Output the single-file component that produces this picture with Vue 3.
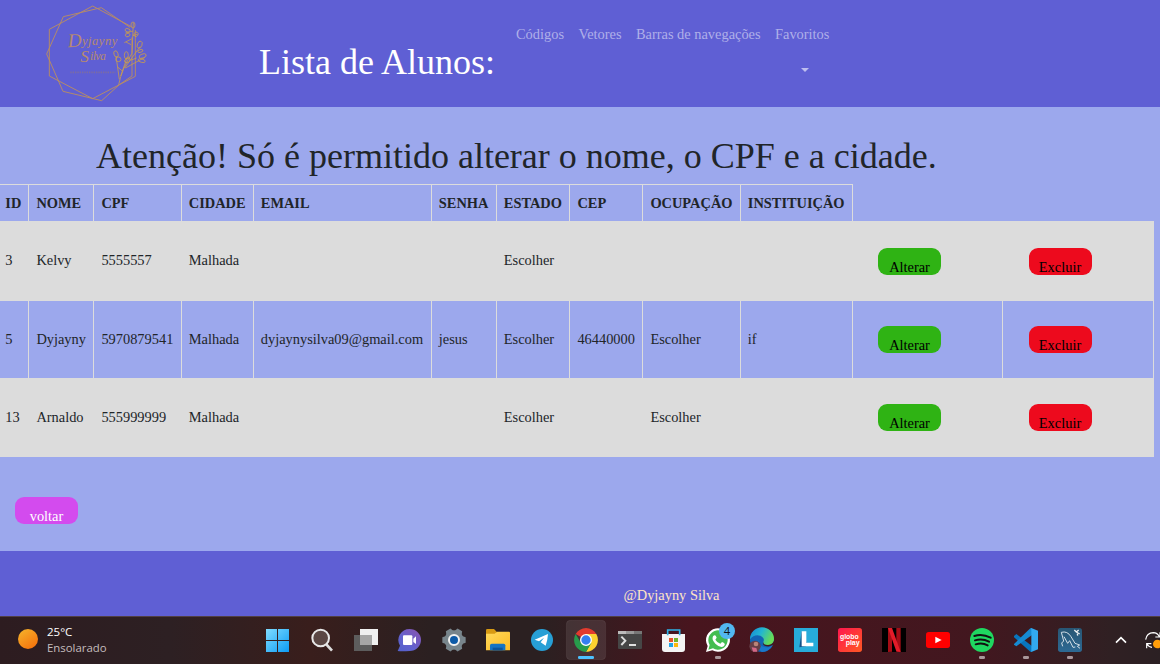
<script setup>
const columns = ['ID', 'NOME', 'CPF', 'CIDADE', 'EMAIL', 'SENHA', 'ESTADO', 'CEP', 'OCUPAÇÃO', 'INSTITUIÇÃO']
const rows = [
  ['3', 'Kelvy', '5555557', 'Malhada', '', '', 'Escolher', '', '', ''],
  ['5', 'Dyjayny', '5970879541', 'Malhada', 'dyjaynysilva09@gmail.com', 'jesus', 'Escolher', '46440000', 'Escolher', 'if'],
  ['13', 'Arnaldo', '555999999', 'Malhada', '', '', 'Escolher', '', 'Escolher', ''],
]
const links = ['Códigos', 'Vetores', 'Barras de navegações']
</script>

<template>
  <div class="page">
    <header class="top">
      <svg class="logo" viewBox="0 0 420 330" fill="none" stroke="#b98d62" stroke-width="2.8">
        <path d="M188 18 304 80M316 90V229L188 296 58 228V88L188 18" />
        <path d="M214 23 100 50 50 162 99 274 215 302 268 254M214 23 300 82M306 112V228L268 254" />
        <g stroke="#d0a044" stroke-width="2.2">
          <path d="M266 254Q276 205 306 160L310 68M268 238 258 168M272 228 292 170M284 204 330 140M286 204 345 172M304 117 283 128M309 107 322 103M309 93 286 99M303 134 288 126M277 213 263 201M301 181 320 174" />
          <ellipse cx="309" cy="75" rx="6" ry="9" />
          <ellipse cx="293" cy="91" rx="8" ry="5" transform="rotate(20 293 91)" />
          <ellipse cx="293" cy="105" rx="7" ry="5" transform="rotate(-20 293 105)" />
          <ellipse cx="318" cy="103" rx="6" ry="7" transform="rotate(30 318 103)" />
          <ellipse cx="329" cy="134" rx="7" ry="11" transform="rotate(20 329 134)" />
          <ellipse cx="331" cy="153" rx="8" ry="4" transform="rotate(-20 331 153)" />
          <ellipse cx="338" cy="168" rx="11" ry="6" transform="rotate(-20 338 168)" />
          <ellipse cx="335" cy="182" rx="11" ry="5" transform="rotate(15 335 182)" />
          <ellipse cx="258" cy="162" rx="6" ry="10" transform="rotate(-20 258 162)" />
          <ellipse cx="265" cy="178" rx="8" ry="7" />
          <ellipse cx="289" cy="166" rx="6" ry="11" />
          <ellipse cx="292" cy="181" rx="9" ry="6" transform="rotate(-30 292 181)" />
        </g>
        <g class="script" fill="#b68a70" stroke="none">
          <text x="114" y="142" font-size="58" transform="rotate(-3 114 142)">D</text>
          <text x="156" y="135" font-size="38" textLength="106">yjayny</text>
          <text x="151" y="187" font-size="52">S</text>
          <text x="180" y="180" font-size="36" textLength="48">ilva</text>
        </g>
        <path d="M121 217H256" stroke="#7d6da1" stroke-width="5" stroke-dasharray="4 3" />
      </svg>
      <h1>Lista de Alunos:</h1>
      <nav>
        <a v-for="l in links" :key="l">{{ l }}</a>
        <a class="fav">Favoritos<i class="caret"></i></a>
      </nav>
    </header>

    <main>
      <h2>Atenção! Só é permitido alterar o nome, o CPF e a cidade.</h2>
      <table>
        <colgroup>
          <col class="c0" /><col class="c1" /><col class="c2" /><col class="c3" /><col class="c4" /><col class="c5" />
          <col class="c6" /><col class="c7" /><col class="c8" /><col class="c9" /><col class="c10" /><col class="c11" />
        </colgroup>
        <thead>
          <tr><th v-for="c in columns" :key="c">{{ c }}</th></tr>
        </thead>
        <tbody>
          <tr v-for="r in rows" :key="r[0]">
            <td v-for="(v, i) in r" :key="i">{{ v }}</td>
            <td class="act"><button class="btn edit">Alterar</button></td>
            <td class="act del"><button class="btn remove">Excluir</button></td>
          </tr>
        </tbody>
      </table>
      <button class="btn back">voltar</button>
    </main>

    <footer>@Dyjayny Silva</footer>

    <div class="taskbar">
      <div class="weather">
        <i class="sun"></i>
        <div><b>25°C</b><span>Ensolarado</span></div>
      </div>
      <div class="apps">
        <svg viewBox="0 0 132 144">
          <defs><linearGradient id="win" x1="0" y1="0" x2="1" y2="1"><stop stop-color="#7fdcff" /><stop offset="1" stop-color="#0c9bf5" /></linearGradient></defs>
          <path fill="url(#win)" d="M30 39H63V72H30ZM66 39H99V72H66ZM30 75H63V108H30ZM66 75H99V108H66Z" />
        </svg>
        <svg viewBox="0 0 132 144">
          <path d="M78 84 96 104" stroke="#dedede" stroke-width="8" />
          <circle cx="62" cy="66" r="25" fill="#5b4744" stroke="#e8e8e8" stroke-width="6" />
        </svg>
        <svg viewBox="0 0 132 144">
          <path fill="#f0f0f0" d="M48 39H102V87H48Z" />
          <path fill="#5d5d5d" d="M30 57H84V105H30Z" />
          <path fill="#a6a6a6" d="M48 57H84V87H48Z" />
        </svg>
        <svg viewBox="0 0 132 144">
          <defs><linearGradient id="chat" x1="1" y1="0" x2="0" y2="1"><stop stop-color="#8b52ad" /><stop offset=".6" stop-color="#6262cf" /><stop offset="1" stop-color="#5360c9" /></linearGradient></defs>
          <path fill="url(#chat)" d="M65 39A34 33 0 1 1 65 105Q40 107 29 105L36 89A34 33 0 0 1 65 39Z" />
          <rect x="45" y="58" width="28" height="29" rx="3" fill="#fff" />
          <path fill="#fff" d="M76 68 84 61V84L76 78Z" />
        </svg>
        <svg viewBox="0 0 132 144">
          <g fill="#78858c">
            <circle cx="66" cy="72" r="29" />
            <path d="M53 50 58 37H74L79 50Z" transform="rotate(30 66 72)" />
            <path d="M53 50 58 37H74L79 50Z" transform="rotate(90 66 72)" />
            <path d="M53 50 58 37H74L79 50Z" transform="rotate(150 66 72)" />
            <path d="M53 50 58 37H74L79 50Z" transform="rotate(210 66 72)" />
            <path d="M53 50 58 37H74L79 50Z" transform="rotate(270 66 72)" />
            <path d="M53 50 58 37H74L79 50Z" transform="rotate(330 66 72)" />
          </g>
          <circle cx="66" cy="72" r="15" fill="#0d5aa7" stroke="#f2f2f2" stroke-width="6" />
        </svg>
        <svg viewBox="0 0 132 144">
          <defs><linearGradient id="folder" x1="0" y1="0" x2="1" y2="1"><stop stop-color="#ffd95c" /><stop offset="1" stop-color="#fdbc24" /></linearGradient></defs>
          <path fill="#d79a13" d="M30 43Q30 39 34 39H54L62 47V60H30Z" />
          <path fill="url(#folder)" d="M30 53H56L63 47H99Q102 47 102 51V103H30Z" />
          <path fill="#1474c4" d="M42 103V88Q42 83 47 83H83Q88 83 88 88V103Z" />
          <path fill="#0b559c" d="M50 95H80V103H50Z" />
        </svg>
        <svg viewBox="0 0 132 144">
          <circle cx="66" cy="72" r="33" fill="#279fd5" />
          <path fill="#fff" d="M44 71 84 54Q83 72 77 89L62 79 72 65 57 76Z" />
        </svg>
        <svg viewBox="0 0 132 144">
          <rect x="7" y="13" width="118" height="118" rx="12" fill="#ffffff18" stroke="#ffffff18" stroke-width="2" />
          <path fill="#e33b2e" d="M66 72 35 54A36 36 0 0 1 97 54H66Z" />
          <path fill="#fcd12f" d="M66 72V54H97A36 36 0 0 1 66 108L80 82Z" />
          <path fill="#279c4b" d="M35 54A36 36 0 0 0 66 108L82 81 66 72 51 81Z" />
          <circle cx="66" cy="72" r="16" fill="#347ff0" stroke="#fff" stroke-width="4" />
          <rect x="42" y="120" width="48" height="9" rx="4" fill="#4cc2ff" />
        </svg>
        <svg viewBox="0 0 132 144">
          <rect x="30" y="45" width="72" height="54" rx="3" fill="#464646" />
          <path fill="#bcbcbc" d="M30 45H54V54H30Z" /><path fill="#999" d="M54 45H78V54H54Z" /><path fill="#777" d="M78 45H102V54H78Z" />
          <path d="M40 62 52 74 40 87M63 87H84" fill="none" stroke="#dfdfdf" stroke-width="6" />
        </svg>
        <svg viewBox="0 0 132 144">
          <path d="M47 58V42H83V58" fill="none" stroke="#2eb3e8" stroke-width="5" />
          <path fill="#f4f4f4" d="M30 54H99V99Q99 108 90 108H39Q30 108 30 99Z" />
          <path d="M47 54V58M83 54V58" stroke="#2eb3e8" stroke-width="5" />
          <path fill="#e6532b" d="M51 66H63V78H51Z" /><path fill="#72b52b" d="M66 66H78V78H66Z" />
          <path fill="#20a4e8" d="M51 81H63V93H51Z" /><path fill="#fcb90b" d="M66 81H78V93H66Z" />
        </svg>
        <svg viewBox="0 0 132 144">
          <path fill="#fff" d="M30 108 35 90A36 35 0 1 1 49 103Z" />
          <path fill="#43bd50" d="M37 101 41 87A29 29 0 1 1 51 97Z" />
          <path fill="#fff" d="M51 61Q58 53 62 65L58 71Q64 81 73 83L78 78Q91 82 84 90Q74 98 58 83Q46 71 51 61Z" />
          <circle cx="93" cy="45" r="24" fill="#52b8f0" />
          <text class="count" x="83" y="57" font-size="34" fill="#111">4</text>
          <rect x="57" y="120" width="18" height="9" rx="4" fill="#a9979b" />
        </svg>
        <svg viewBox="0 0 132 144">
          <defs>
            <linearGradient id="edge" x1="0" y1="0" x2="1" y2=".4"><stop stop-color="#1687d3" /><stop offset=".5" stop-color="#22b5d2" /><stop offset="1" stop-color="#67dc56" /></linearGradient>
          </defs>
          <circle cx="66" cy="72" r="36" fill="#1264b4" />
          <path fill="url(#edge)" d="M30 70A36 36 0 0 1 102 70Q102 86 84 87Q68 87 70 78Q76 66 61 59Q42 54 30 70Z" />
          <path fill="#43191f" d="M70 78Q68 87 84 87 96 87 102 74V88H97Q86 94 74 89 66 85 70 78Z" />
          <path fill="#1a78cb" d="M55 70Q53 91 77 94Q91 96 98 88Q86 108 66 108 49 98 55 70Z" />
          <circle cx="45" cy="91" r="17" fill="#653e47" />
          <circle cx="48" cy="84" r="7" fill="#b98478" /><path fill="#d36787" d="M35 94 49 96 52 107H39Z" />
        </svg>
        <svg viewBox="0 0 132 144">
          <path fill="#27acda" d="M30 36H102V108H30Z" />
          <path fill="#12518a" d="M53 46 46 94 66 91 68 80Z" />
          <path fill="#fff" d="M53 46H67V80H88V91H53Z" />
        </svg>
        <svg viewBox="0 0 132 144">
          <defs><linearGradient id="globo" x1="0" y1="0" x2="1" y2="1"><stop stop-color="#ff174e" /><stop offset="1" stop-color="#ff5823" /></linearGradient></defs>
          <rect x="30" y="36" width="72" height="72" rx="8" fill="url(#globo)" />
          <g class="globo" fill="#fff"><text x="36" y="68" font-size="20" textLength="56" lengthAdjust="spacingAndGlyphs">globo</text><text x="53" y="86" font-size="20" textLength="42" lengthAdjust="spacingAndGlyphs">play</text></g>
        </svg>
        <svg viewBox="0 0 132 144">
          <path fill="#000" d="M30 36H102V108H30Z" />
          <path fill="#a50d16" d="M48 36H60V107L48 108ZM73 36H86V108L73 107Z" />
          <path fill="#e41b29" d="M48 36H60L86 108 73 106Z" />
        </svg>
        <svg viewBox="0 0 132 144">
          <rect x="30" y="48" width="72" height="48" rx="8" fill="#f00" />
          <path fill="#fff" d="M58 62V82L77 72Z" />
        </svg>
        <svg viewBox="0 0 132 144">
          <circle cx="66" cy="72" r="36" fill="#1fd760" />
          <path d="M43 60Q67 52 92 65M45 73Q67 66 87 77M47 85Q67 79 83 88" fill="none" stroke="#111" stroke-width="6" stroke-linecap="round" />
          <rect x="57" y="120" width="18" height="9" rx="4" fill="#a9979b" />
        </svg>
        <svg viewBox="0 0 132 144">
          <path fill="#0875bd" d="M30 60 37 54 84 90V108L79 107 30 64Z" />
          <path fill="#168ad2" d="M30 84 79 37 84 36V57L37 91 30 86Z" />
          <path fill="#32a9ef" d="M82 36 102 44V100L82 108Z" />
          <rect x="57" y="120" width="18" height="9" rx="4" fill="#a9979b" />
        </svg>
        <svg viewBox="0 0 132 144">
          <defs><linearGradient id="sql" x1="0" y1="0" x2="0" y2="1"><stop stop-color="#285674" /><stop offset="1" stop-color="#2d6993" /></linearGradient></defs>
          <rect x="30" y="36" width="72" height="72" rx="8" fill="url(#sql)" />
          <path d="M44 91 41 81 47 75 40 49Q58 44 69 62L81 82 95 87 88 91 96 97M48 62 59 82 65 74 75 94 82 93" fill="none" stroke="#d3dfe7" stroke-width="3" />
          <path d="M79 42 85 48 95 54M85 48 92 42M88 53 89 59" stroke="#e9eef1" stroke-width="4" />
          <rect x="57" y="120" width="18" height="9" rx="4" fill="#a9979b" />
        </svg>
        <svg viewBox="0 0 132 144">
          <path d="M72 80 87 65 102 80" fill="none" stroke="#fff" stroke-width="5" />
        </svg>
        <svg class="sync" viewBox="0 0 72 144">
          <path d="M29 71Q32 51 52 50 64 50 70 62M72 49V63H58M48 94Q38 93 33 84M32 97V83H46" fill="none" stroke="#fff" stroke-width="3.5" />
          <circle cx="64" cy="84" r="13" fill="#ff9d0a" />
        </svg>
      </div>
    </div>
  </div>
</template>

<style>
body { margin: 0; overflow: hidden; }
</style>

<style scoped>
.page {
  width: 1160px;
  height: 664px;
  display: flex;
  flex-direction: column;
  overflow: hidden;
  background: #9ca8ed;
  color: #212529;
  font: 14.4px/22px "Liberation Serif", "Times New Roman", serif;
}
h1, h2 { margin: 0; font-size: 36px; font-weight: 400; line-height: 43px; white-space: nowrap; }
.top { flex: none; height: 107px; display: flex; align-items: flex-start; background: #5f5fd4; }
.logo { width: 140px; height: 110px; margin-left: 30px; flex: none; }
.script { font-family: "Liberation Serif", serif; font-style: italic; }
h1 { width: 257px; margin: 41px 0 0 89px; color: #fff; flex: none; }
nav { display: flex; gap: 14.4px; margin-top: 23px; color: #afafe9; white-space: nowrap; }
.fav { display: flex; flex-direction: column; }
.caret {
  width: 0;
  margin: 23px 0 0 26px;
  border: 4px solid transparent;
  border-top-color: #bebeef;
  border-bottom: 0;
}
main { flex: none; height: 444px; }
h2 { padding: 28px 0 6px 96px; }
table { width: 1154px; table-layout: fixed; border-collapse: separate; border-spacing: 0; }
.c0 { width: 29px } .c1 { width: 65px } .c2 { width: 88px } .c3 { width: 72px }
.c4 { width: 178px } .c5 { width: 65px } .c6 { width: 73px } .c7 { width: 73px }
.c8 { width: 98px } .c9 { width: 112px } .c10 { width: 150px } .c11 { width: 151px }
th, td { box-sizing: border-box; padding: 0 0 0 7.4px; border-right: 1px solid #dcdcdc; text-align: left; white-space: nowrap; }
tr > :nth-child(4), tr > :nth-child(5), tr > :nth-child(6), tr > :nth-child(7), tr > :nth-child(10) { padding-left: 6.8px; }
th:first-child, td:first-child { padding-left: 5.3px; }
th { height: 37px; border-top: 1px solid #dcdcdc; }
td { height: 80px; padding-bottom: 2px; }
tbody tr:nth-child(odd) { background: #dcdcdc; }
tbody tr:nth-child(2) td { height: 77px; }
tbody tr:nth-child(3) td { height: 79px; padding-bottom: 1px; }
td.act { padding: 1px 0 0 25px; }
td.del { padding-left: 26px; }
tbody tr:nth-child(2) td.act, tbody tr:nth-child(3) td.act { padding-top: 0; padding-bottom: 0; }
.btn {
  display: block;
  width: 63px;
  height: 27px;
  padding: 8px 0 0;
  border: 0;
  border-radius: 9px;
  color: #000;
  font: inherit;
  text-align: center;
}
.edit { background: #2fb314; }
.remove { background: #ed0a1d; padding-right: 1px; }
.back { margin: 40px 0 0 15px; background: #d34bee; color: #fff; }
footer { flex: none; height: 65px; box-sizing: border-box; padding: 33px 0 0 623.5px; background: #5f5fd4; color: #ffe4c4; }
.taskbar {
  flex: none;
  height: 48px;
  display: flex;
  box-shadow: inset 0 1px #514044;
  background: linear-gradient(90deg, #2d1c20 0, #2d2023 170px, #391e1c 310px, #2b2021 430px, #2b2021 540px, #48151e 690px, #42171f 980px, #302023 1110px, #2b2023 1160px);
}
.weather { width: 238px; padding-left: 18px; display: flex; align-items: flex-start; gap: 9px; color: #fff; font: 12px/16px "Open Sans", sans-serif; }
.sun { width: 20px; height: 20px; margin-top: 13px; border-radius: 50%; background: linear-gradient(145deg, #f6b52c, #f46b09); }
.weather div { display: flex; flex-direction: column; padding-top: 8px; }
.weather b { font-weight: 400; font-size: 11.5px; }
.weather span { color: #c5bdbe; font-size: 11.4px; }
.apps { display: flex; }
.apps svg { width: 44px; height: 48px; flex: none; }
.apps svg.sync { width: 24px; }
.count { font-family: "Open Sans", sans-serif; }
.globo { font-family: "Liberation Sans", sans-serif; font-weight: 700; }
</style>
